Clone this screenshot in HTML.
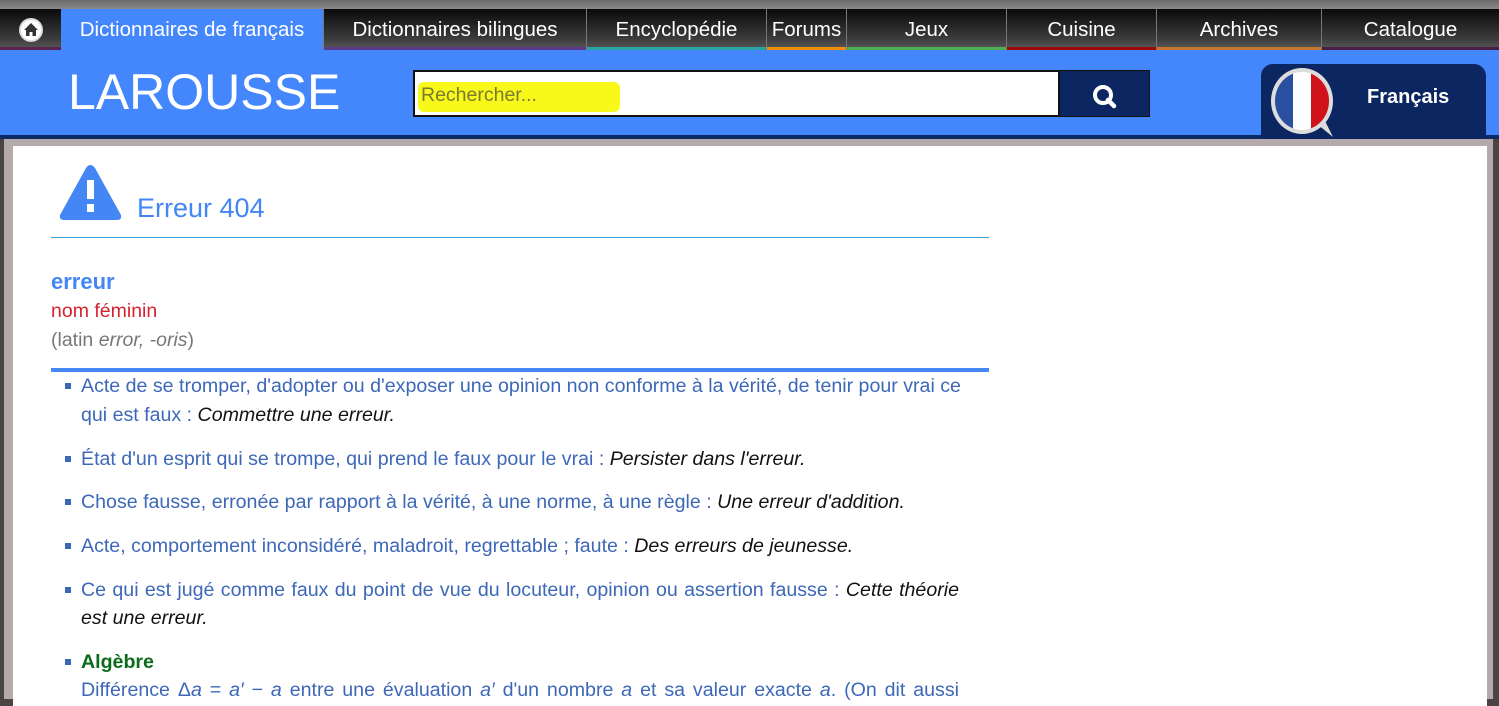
<!DOCTYPE html>
<html><head><meta charset="utf-8"><style>
*{margin:0;padding:0;box-sizing:border-box}
body{width:1499px;height:695px;overflow:hidden;background:#4a4544;font-family:"Liberation Sans",Arial,sans-serif;position:relative}
.top{position:absolute;left:0;top:0;width:1499px;height:9px;background:linear-gradient(#6b6b6b,#8a8a8a)}
.nav{position:absolute;top:9px;left:0;width:1499px;height:41px;background:linear-gradient(#0a0a0a,#3a3a3a 70%,#5a5a5a)}
.tab{position:absolute;top:0;height:41px;color:#fff;font-size:20.5px;text-align:center;line-height:42px;border-left:1px solid #777;white-space:nowrap}
.tab i{position:absolute;left:0;right:0;bottom:0;height:3px}
.hdr{position:absolute;top:50px;left:0;width:1499px;height:85px;background:#4486fb}
.navy{position:absolute;top:135px;left:0;width:1499px;height:4px;background:#0b2a66}
.frame{position:absolute;top:139px;left:4px;width:1489px;height:560px;background:#b5aaab}
.content{position:absolute;top:146px;left:13px;width:1474px;height:560px;background:#fff}
.logo{position:absolute;left:68px;top:63px;color:#fff;font-size:50px;letter-spacing:0;font-weight:300}
.search{position:absolute;left:413px;top:70px;width:647px;height:47px;background:#fff;border:2px solid #111}
.hl{position:absolute;left:418px;top:82px;width:202px;height:30px;background:#f8f81a;border-radius:6px}
.sbtn{position:absolute;left:1059px;top:70px;width:91px;height:47px;background:#0b2660;border:1px solid #111}
.fr{position:absolute;left:1261px;top:64px;width:225px;height:75px;background:#0b2660;border-radius:12px 12px 0 0}
.t{position:absolute;font-size:19.6px;color:#3d68b8;white-space:nowrap}
.j{width:878px;text-align:justify;text-align-last:justify;white-space:normal}
.t em{color:#111}
.b{position:absolute;left:65px;width:6px;height:6px;background:#3d68b8}
</style></head><body>
<div class="top"></div>
<div class="nav">
 <div class="tab" style="left:0;width:61px;border:none"><svg width="26" height="26" viewBox="0 0 26 26" style="margin-top:8px"><circle cx="13" cy="13" r="12" fill="#ddd"/><circle cx="13" cy="13" r="10" fill="#fff"/><path d="M6 13 L13 6 L20 13 H18 V19 H8 V13Z" fill="#333"/><rect x="11.5" y="15" width="3" height="4" fill="#fff"/></svg><i style="background:#5b2150"></i></div>
 <div class="tab" style="left:61px;width:262px;background:#4486fb;border:none">Dictionnaires de français</div>
 <div class="tab" style="left:323px;width:263px">Dictionnaires bilingues<i style="background:#5b3a8c"></i></div>
 <div class="tab" style="left:586px;width:180px">Encyclopédie<i style="background:#2aa3a3"></i></div>
 <div class="tab" style="left:766px;width:80px">Forums<i style="background:#f0900a"></i></div>
 <div class="tab" style="left:846px;width:160px">Jeux<i style="background:#4caf50"></i></div>
 <div class="tab" style="left:1006px;width:150px">Cuisine<i style="background:#9b0a0a"></i></div>
 <div class="tab" style="left:1156px;width:165px">Archives<i style="background:#c87530"></i></div>
 <div class="tab" style="left:1321px;width:178px">Catalogue<i style="background:#4a1d45"></i></div>
</div>
<div class="hdr"></div>
<div class="logo">LAROUSSE</div>
<div class="search"></div>
<div class="hl"></div>
<div style="position:absolute;left:421px;top:84px;font-size:19.5px;color:#7a7a30">Rechercher...</div>
<div class="sbtn"><svg width="91" height="45" viewBox="0 0 91 45"><circle cx="43" cy="24" r="8" fill="none" stroke="#fff" stroke-width="4"/><path d="M48 29 L54 35" stroke="#fff" stroke-width="4.5" stroke-linecap="round"/></svg></div>
<div class="navy"></div>
<div class="frame"></div>
<div class="content"></div>
<div class="fr"><svg width="80" height="75" viewBox="0 0 80 75" style="position:absolute;left:6px;top:0"><defs><clipPath id="c"><ellipse cx="35" cy="37" rx="27" ry="29"/></clipPath></defs><ellipse cx="35" cy="37" rx="31" ry="33" fill="#ddd"/><path d="M50 60 L66 73 L58 57Z" fill="#ddd"/><g clip-path="url(#c)"><rect x="0" y="0" width="27" height="75" fill="#2a4fa0"/><rect x="26" y="0" width="18" height="75" fill="#fff"/><rect x="44" y="0" width="30" height="75" fill="#d0121b"/></g></svg><div style="position:absolute;left:106px;top:22px;color:#fff;font-size:20px;font-weight:bold">Français</div></div>
<svg style="position:absolute;left:58px;top:162px" width="65" height="60" viewBox="0 0 65 60"><path d="M32 3 Q35 3 37 6 L63 53 Q64 58 59 58 H6 Q1 58 2 53 L28 6 Q30 3 32 3Z" fill="#4486f4"/><rect x="29" y="18" width="7" height="19" fill="#fff"/><rect x="29" y="42" width="7" height="8" fill="#fff"/></svg>
<div style="position:absolute;left:137px;top:193px;font-size:27px;color:#4486f4">Erreur 404</div>
<div style="position:absolute;left:51px;top:237px;width:938px;height:1px;background:#3aa0d8"></div>
<div style="position:absolute;left:51px;top:269px;font-size:22px;font-weight:bold;color:#4486f4">erreur</div>
<div style="position:absolute;left:51px;top:300px;font-size:19.5px;color:#d8232f">nom féminin</div>
<div style="position:absolute;left:51px;top:329px;font-size:19.5px;color:#777">(latin <i>error, -oris</i>)</div>
<div style="position:absolute;left:51px;top:368px;width:938px;height:4px;background:#4486f4"></div>
<div class="b" style="top:383px"></div><div class="t" style="left:81px;top:375px">Acte de se tromper, d'adopter ou d'exposer une opinion non conforme à la vérité, de tenir pour vrai ce</div>
<div class="t" style="left:81px;top:404px">qui est faux : <em><i>Commettre une erreur.</i></em></div>
<div class="b" style="top:456px"></div><div class="t" style="left:81px;top:448px">État d'un esprit qui se trompe, qui prend le faux pour le vrai : <em><i>Persister dans l'erreur.</i></em></div>
<div class="b" style="top:499px"></div><div class="t" style="left:81px;top:491px">Chose fausse, erronée par rapport à la vérité, à une norme, à une règle : <em><i>Une erreur d'addition.</i></em></div>
<div class="b" style="top:543px"></div><div class="t" style="left:81px;top:535px">Acte, comportement inconsidéré, maladroit, regrettable ; faute : <em><i>Des erreurs de jeunesse.</i></em></div>
<div class="b" style="top:587px"></div><div class="t j" style="left:81px;top:579px">Ce qui est jugé comme faux du point de vue du locuteur, opinion ou assertion fausse : <em><i>Cette théorie</i></em></div>
<div class="t" style="left:81px;top:607px"><em><i>est une erreur.</i></em></div>
<div class="b" style="top:659px"></div><div class="t" style="left:81px;top:651px;color:#0b6b1b;font-weight:bold">Algèbre</div>
<div class="t j" style="left:81px;top:679px">Différence Δ<i>a</i> = <i>a′</i> − <i>a</i> entre une évaluation <i>a′</i> d'un nombre <i>a</i> et sa valeur exacte <i>a</i>. (On dit aussi</div>
</body></html>
